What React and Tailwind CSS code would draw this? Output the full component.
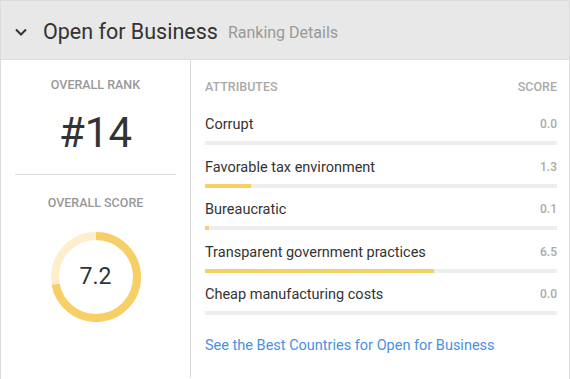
import React from "react";

const attributes = [
  { name: "Corrupt", score: 0.0 },
  { name: "Favorable tax environment", score: 1.3 },
  { name: "Bureaucratic", score: 0.1 },
  { name: "Transparent government practices", score: 6.5 },
  { name: "Cheap manufacturing costs", score: 0.0 },
];

const Donut = ({ value }) => {
  const r = 41;
  const c = 2 * Math.PI * r;
  const filled = (value / 10) * c;
  return (
    <div className="relative w-[90px] h-[90px]">
      <svg width="90" height="90" viewBox="0 0 90 90" className="-rotate-90">
        <circle cx="45" cy="45" r={r} fill="none" stroke="#fdefcd" strokeWidth="8" />
        <circle
          cx="45"
          cy="45"
          r={r}
          fill="none"
          stroke="#f6cf66"
          strokeWidth="8"
          strokeDasharray={`${filled} ${c}`}
        />
      </svg>
      <div className="absolute inset-0 flex items-center justify-center text-[23px] text-[#333]">
        {value.toFixed(1)}
      </div>
    </div>
  );
};

export default function App() {
  return (
    <div className="w-[570px] h-[379px] bg-white border border-b-0 border-[#dcdcdc] overflow-hidden font-['Roboto',sans-serif]">
      {/* header */}
      <div className="h-[59px] bg-[#e8e8e8] border-b border-[#dcdcdc] flex items-center pl-[14px] pt-[3px]">
        <svg width="12" height="8" viewBox="0 0 12 8" className="mr-[16px] mt-[1px]">
          <path d="M1 1.5 L6 6.5 L11 1.5" fill="none" stroke="#333" strokeWidth="2" />
        </svg>
        <span className="text-[21.5px] text-[#333] leading-none">Open for Business</span>
        <span className="text-[16px] text-[#999] ml-[10px] mt-[3px] leading-none">Ranking Details</span>
      </div>

      <div className="flex h-[318px]">
        {/* left column */}
        <div className="w-[190px] border-r border-[#dcdcdc] flex flex-col items-center pt-[17px] px-[14px]">
          <div className="text-[12.5px] leading-[16px] font-medium text-[#999]">OVERALL RANK</div>
          <div className="text-[42px] leading-[42px] text-[#333] mt-[19px]">#14</div>
          <div className="w-full border-t border-[#dcdcdc] mt-[20px]" />
          <div className="text-[12.5px] leading-[16px] font-medium text-[#999] mt-[20px]">OVERALL SCORE</div>
          <div className="mt-[21px]">
            <Donut value={7.2} />
          </div>
        </div>

        {/* right column */}
        <div className="flex-1 pl-[14px] pr-[12px] pt-[19px]">
          <div className="flex justify-between text-[12.5px] leading-[16px] font-medium text-[#aaa]">
            <span>ATTRIBUTES</span>
            <span>SCORE</span>
          </div>
          <div className="mt-[20px]">
            {attributes.map((a) => (
              <div key={a.name} className="mb-[12.5px]">
                <div className="flex items-baseline justify-between h-[20px] leading-[20px]">
                  <span className="text-[14.5px] text-[#333]">{a.name}</span>
                  <span className="text-[12px] font-medium text-[#aaa] -translate-y-[1px]">{a.score.toFixed(1)}</span>
                </div>
                <div className="mt-[6px] h-[4px] bg-[#eeeeee]">
                  <div className="h-full bg-[#f6cf66]" style={{ width: `${a.score * 10}%` }} />
                </div>
              </div>
            ))}
          </div>
          <a className="block mt-[21px] text-[14.5px] leading-[20px] text-[#4a90e2]">
            See the Best Countries for Open for Business
          </a>
        </div>
      </div>
    </div>
  );
}
